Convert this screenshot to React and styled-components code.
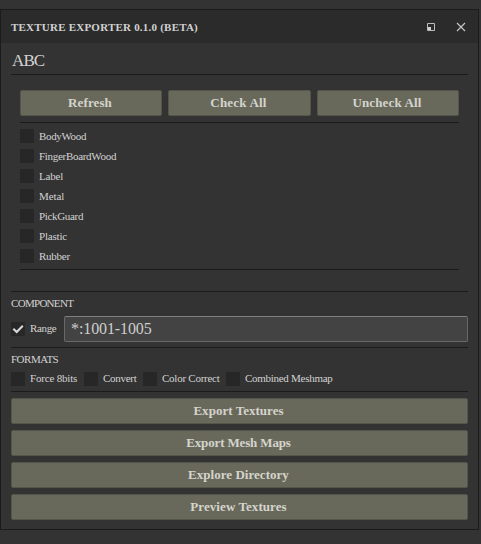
import React from 'react';
import styled, { createGlobalStyle } from 'styled-components';

const GlobalStyle = createGlobalStyle`
  * { box-sizing: border-box; }
  body { margin: 0; background: #333333; overflow: hidden; }
  input, button { font: inherit; color: inherit; margin: 0; }
`;

const Page = styled.main`
  width: 481px;
  height: 544px;
  padding-top: 9px;
  background: #333333;
  color: #d2d2d2;
  font: 11px/14px "Liberation Serif", serif;
`;

const Window = styled.section`
  width: 479px;
  height: 521px;
  border: 1px solid #1b1b1b;
  display: flex;
  flex-direction: column;
`;

const TitleBar = styled.header`
  height: 33px;
  flex: none;
  padding: 1px 12px 0 10px;
  background: #2b2b2b;
  display: flex;
  align-items: center;
`;

const Title = styled.h1`
  margin: 0;
  flex: 1;
  font-size: 11px;
  font-weight: bold;
  letter-spacing: 0.22px;
`;

const WindowControls = styled.div`
  display: flex;
  align-items: center;
  gap: 20px;
  svg { display: block; }
`;

const Content = styled.div`
  padding: 0 10px;
`;

const Heading = styled.h2`
  margin: 0;
  height: 31px;
  padding: 8px 0 0 1px;
  font-size: 17px;
  line-height: 20px;
  font-weight: normal;
  letter-spacing: -0.9px;
`;

const Rule = styled.div`
  height: 1px;
  background: #1b1b1b;
`;

const Materials = styled.div`
  padding: 15px 9px 0;
  height: 216px;
`;

const ButtonRow = styled.div`
  display: grid;
  grid-template-columns: 142px 143px 142px;
  gap: 6px;
  margin-bottom: 6px;
`;

const Button = styled.button`
  height: 26px;
  width: 100%;
  padding: 0 2px 0 0;
  border: 1px solid #55564b;
  border-radius: 2px;
  background: #69695b;
  color: #d4d4cd;
  font-size: 13px;
  font-weight: bold;
  line-height: 24px;
  letter-spacing: ${({ $track = 0 }) => $track}px;
`;

const MaterialList = styled.div`
  padding: 6px 0;
  display: flex;
  flex-direction: column;
  gap: 6px;
`;

const CheckLabel = styled.label`
  height: 14px;
  display: flex;
  align-items: center;
  gap: 5px;
  white-space: nowrap;
  width: ${({ $width }) => ($width ? `${$width}px` : 'auto')};
  letter-spacing: ${({ $track = 0 }) => $track}px;
`;

const CheckBox = styled.span`
  width: 14px;
  height: 14px;
  flex: none;
  background: #272727;
  svg { display: block; }
`;

const SectionTitle = styled.h3`
  margin: 0;
  height: 24px;
  padding-top: 4px;
  font-size: 11px;
  font-weight: normal;
  letter-spacing: ${({ $track = 0 }) => $track}px;
`;

const RangeRow = styled.div`
  display: flex;
  align-items: center;
  margin-bottom: 5px;
  label > span:last-child { padding-bottom: 2px; }
`;

const RangeInput = styled.input`
  width: 404px;
  height: 26px;
  padding: 0 7px 0 6px;
  border: 1px solid #696969;
  border-top-color: #808080;
  border-radius: 2px;
  background: #434343;
  color: #cecece;
  outline: none;
  font-size: 16px;
  letter-spacing: -0.1px;
`;

const FormatRow = styled.div`
  display: flex;
  margin-bottom: 5px;
  label > span:last-child { padding-bottom: 2px; }
`;

const Actions = styled.div`
  padding-top: 6px;
  display: flex;
  flex-direction: column;
  gap: 6px;
`;

const materials = [
  ['BodyWood', -0.35], ['FingerBoardWood', -0.3], ['Label', -0.2], ['Metal', -0.1],
  ['PickGuard', -0.33], ['Plastic', -0.2], ['Rubber', -0.25],
];

const formats = [
  ['Force 8bits', 73, -0.18], ['Convert', 59, -0.28],
  ['Color Correct', 83, -0.25], ['Combined Meshmap', 120, -0.28],
];

const selection = [['Refresh', 0.1], ['Check All', 0.2], ['Uncheck All', 0.15]];

const actions = [
  ['Export Textures', 0.03], ['Export Mesh Maps', -0.15],
  ['Explore Directory', 0.03], ['Preview Textures', 0.07],
];

function Check({ text, checked, track, width }) {
  return (
    <CheckLabel $track={track} $width={width}>
      <CheckBox>
        {checked && (
          <svg width="14" height="14" viewBox="0 0 14 14" fill="none" stroke="#d8d8d8" strokeWidth="2.1">
            <path d="M2.3 6.7 5.7 10 11.8 3.8" />
          </svg>
        )}
      </CheckBox>
      <span>{text}</span>
    </CheckLabel>
  );
}

export default function App() {
  return (
    <Page>
      <GlobalStyle />
      <Window>
        <TitleBar>
          <Title>TEXTURE EXPORTER 0.1.0 (BETA)</Title>
          <WindowControls>
            <svg width="10" height="10" viewBox="0 0 10 10">
              <path d="M1.5 1.5h7v7h-7z" fill="none" stroke="#bcbcbc" />
              <path d="M2 5h3v3H2z" fill="#d0d0d0" />
            </svg>
            <svg width="10" height="10" viewBox="0 0 10 10" stroke="#c8c8c8" strokeWidth="1.1">
              <path d="m1 1 8 8M9 1 1 9" />
            </svg>
          </WindowControls>
        </TitleBar>
        <Content>
          <Heading>ABC</Heading>
          <Rule />
          <Materials>
            <ButtonRow>
              {selection.map(([text, track]) => <Button key={text} $track={track}>{text}</Button>)}
            </ButtonRow>
            <Rule />
            <MaterialList>
              {materials.map(([text, track]) => <Check key={text} text={text} track={track} />)}
            </MaterialList>
            <Rule />
          </Materials>
          <Rule />
          <SectionTitle $track={-0.7}>COMPONENT</SectionTitle>
          <RangeRow>
            <Check text="Range" checked width={53} track={-0.35} />
            <RangeInput aria-label="Range" defaultValue="*:1001-1005" />
          </RangeRow>
          <Rule />
          <SectionTitle $track={-0.5}>FORMATS</SectionTitle>
          <FormatRow>
            {formats.map(([text, width, track]) => (
              <Check key={text} text={text} width={width} track={track} />
            ))}
          </FormatRow>
          <Rule />
          <Actions>
            {actions.map(([text, track]) => <Button key={text} $track={track}>{text}</Button>)}
          </Actions>
        </Content>
      </Window>
    </Page>
  );
}
